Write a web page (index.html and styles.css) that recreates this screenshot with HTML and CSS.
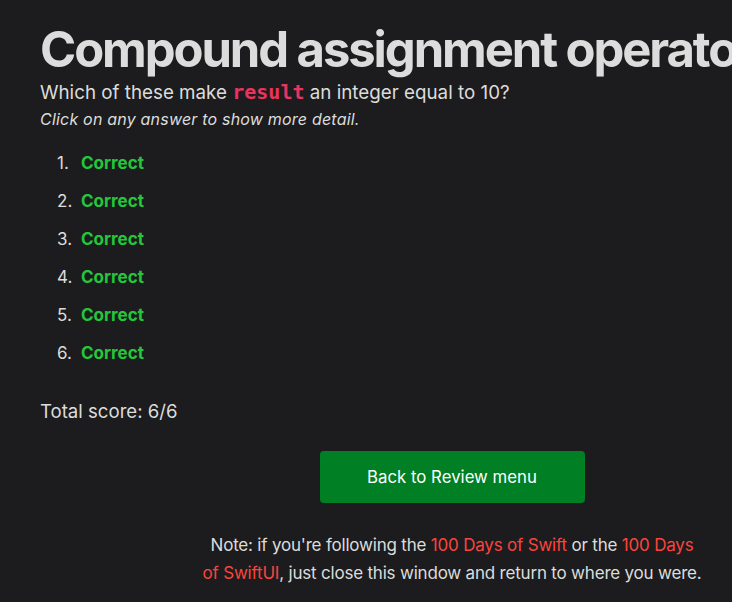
FILE: index.html
```html
<!DOCTYPE html>
<html lang="en">
<head>
<meta charset="utf-8">
<title>Compound assignment operators</title>
<link rel="stylesheet" href="styles.css">
</head>
<body>
<main class="page">
  <h1 class="title">Compound assignment operators</h1>
  <p class="question">Which of these make <code class="code">result</code> an integer equal to 10?</p>
  <p class="hint">Click on any answer to show more detail.</p>
  <ol class="answers">
    <li class="answer"><span class="correct">Correct</span></li>
    <li class="answer"><span class="correct">Correct</span></li>
    <li class="answer"><span class="correct">Correct</span></li>
    <li class="answer"><span class="correct">Correct</span></li>
    <li class="answer"><span class="correct">Correct</span></li>
    <li class="answer"><span class="correct">Correct</span></li>
  </ol>
  <p class="score">Total score: 6/6</p>
  <div class="actions">
    <a class="button" href="#">Back to Review menu</a>
    <p class="note">Note: if you're following the <a class="link" href="#">100 Days of Swift</a> or the <a class="link" href="#">100 Days of SwiftUI</a>, just close this window and return to where you were.</p>
  </div>
</main>
</body>
</html>
```
FILE: styles.css
```css
html, body {
  margin: 0;
  padding: 0;
  background: #1c1c1e;
  overflow: hidden;
}
body {
  font-family: Inter, "Noto Sans", sans-serif;
  color: #dcdcdc;
}
.page {
  width: 824px;
  padding: 21px 0 0 40px;
}
.title {
  margin: 0;
  font-size: 49px;
  line-height: 58px;
  font-weight: 700;
  color: #dcdcdc;
  white-space: nowrap;
  letter-spacing: -2.1px;
}
.question {
  margin: 0;
  font-size: 18.8px;
  line-height: 26px;
}
.code {
  font-family: "DejaVu Sans Mono", monospace;
  font-weight: 700;
  font-size: 20px;
  color: #e8345e;
}
.hint {
  margin: 2px 0 0;
  font-size: 16px;
  line-height: 22px;
  font-style: italic;
  letter-spacing: 0.2px;
}
.answers {
  list-style: none;
  counter-reset: answer;
  margin: 21px 0 0;
  padding: 0 0 0 17px;
  font-size: 17px;
  line-height: 24px;
}
.answer {
  counter-increment: answer;
  display: flex;
  margin-bottom: 14px;
}
.answer::before {
  content: counter(answer) ".";
  width: 24px;
}
.correct {
  color: #22c83a;
  font-weight: 700;
}
.score {
  margin: 34px 0 0;
  font-size: 18.6px;
  line-height: 24px;
}
.actions {
  display: flex;
  flex-direction: column;
  align-items: center;
  margin-top: 28px;
}
.button {
  display: flex;
  align-items: center;
  justify-content: center;
  width: 265px;
  height: 52px;
  background: #007f24;
  color: #ffffff;
  border-radius: 4px;
  text-decoration: none;
  font-size: 16.8px;
}
.note {
  margin: 28px 0 0;
  width: 499px;
  text-align: center;
  font-size: 17px;
  line-height: 28px;
  letter-spacing: -0.2px;
}
.link {
  color: #fa443d;
  text-decoration: none;
}
```
